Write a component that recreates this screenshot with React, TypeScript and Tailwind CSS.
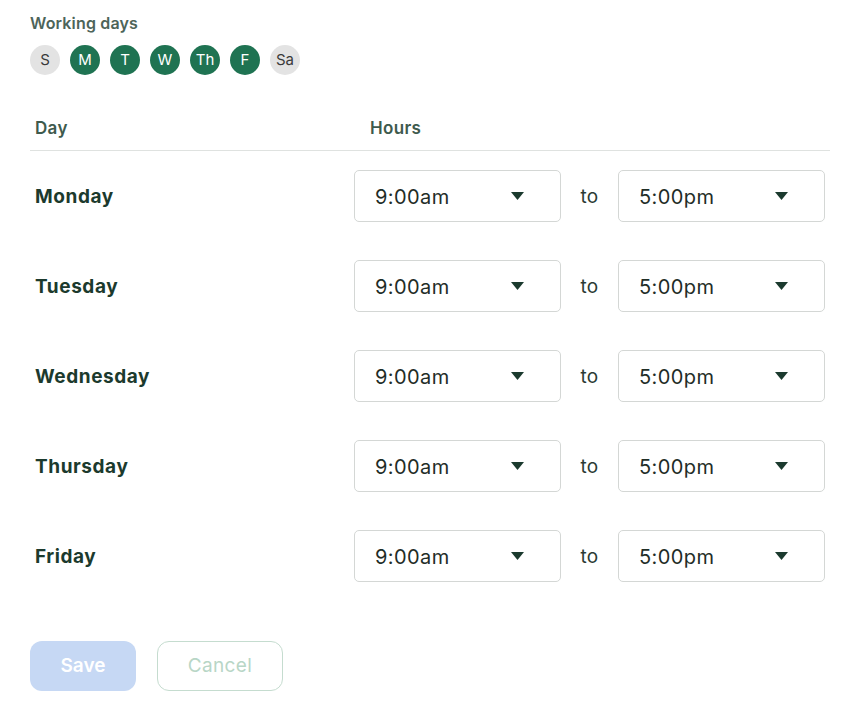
const days = [
  { label: "S", on: false },
  { label: "M", on: true },
  { label: "T", on: true },
  { label: "W", on: true },
  { label: "Th", on: true },
  { label: "F", on: true },
  { label: "Sa", on: false },
];

const rows = ["Monday", "Tuesday", "Wednesday", "Thursday", "Friday"];

function Caret() {
  return (
    <svg width="13" height="8" viewBox="0 0 13 8" aria-hidden="true">
      <path d="M0 0h13L6.5 8z" fill="#1b3a2e" />
    </svg>
  );
}

function TimeSelect({ value }: { value: string }) {
  return (
    <button
      type="button"
      className="flex h-[52px] w-[207px] items-center justify-between rounded-[5px] border border-[#d4d7d5] bg-white pl-5 pr-[36px] text-[20px] tracking-[0.02em] text-[#1f2d27]"
    >
      <span className="pt-[1px]">{value}</span>
      <Caret />
    </button>
  );
}

export default function App() {
  return (
    <div
      className="min-h-screen bg-white pl-[30px] pt-[13px]"
      style={{ fontFamily: "Inter, 'Noto Sans', sans-serif" }}
    >
      <h2 className="text-[16px] font-semibold leading-[20px] tracking-[0.01em] text-[#4d6459]">
        Working days
      </h2>
      <div className="mt-[12px] flex gap-[10px]">
        {days.map((d) => (
          <span
            key={d.label}
            className={
              d.on
                ? "flex h-[30px] w-[30px] items-center justify-center rounded-full bg-[#1f7352] text-[15px] text-white"
                : "flex h-[30px] w-[30px] items-center justify-center rounded-full bg-[#e3e3e3] text-[15px] text-[#3a3a3a]"
            }
          >
            {d.label}
          </span>
        ))}
      </div>

      <div className="mt-[31px] w-[800px]">
        <div className="flex h-[45px] items-center border-b border-[#dfe2e0] pt-[1px] text-[17px] font-semibold tracking-[0.02em] text-[#3e5a4d]">
          <span className="w-[324px] pl-[5px]">Day</span>
          <span className="pl-4">Hours</span>
        </div>
        {rows.map((day) => (
          <div key={day} className="flex items-center py-[19px]">
            <span className="w-[324px] pl-[5px] pt-[2px] text-[19px] font-bold tracking-[0.03em] text-[#1c3a2d]">
              {day}
            </span>
            <TimeSelect value="9:00am" />
            <span className="w-[57px] pt-[2px] text-center text-[19px] tracking-[0.02em] text-[#2b3a33]">to</span>
            <TimeSelect value="5:00pm" />
          </div>
        ))}
      </div>

      <div className="mt-[40px] flex gap-[21px]">
        <button
          type="button"
          className="h-[50px] w-[106px] rounded-xl bg-[#c6d8f4] text-[19px] font-semibold text-white"
        >
          Save
        </button>
        <button
          type="button"
          className="h-[50px] w-[126px] rounded-xl border border-[#c5dccf] bg-white text-[19px] tracking-[0.02em] text-[#b8d6c6]"
        >
          Cancel
        </button>
      </div>
    </div>
  );
}
